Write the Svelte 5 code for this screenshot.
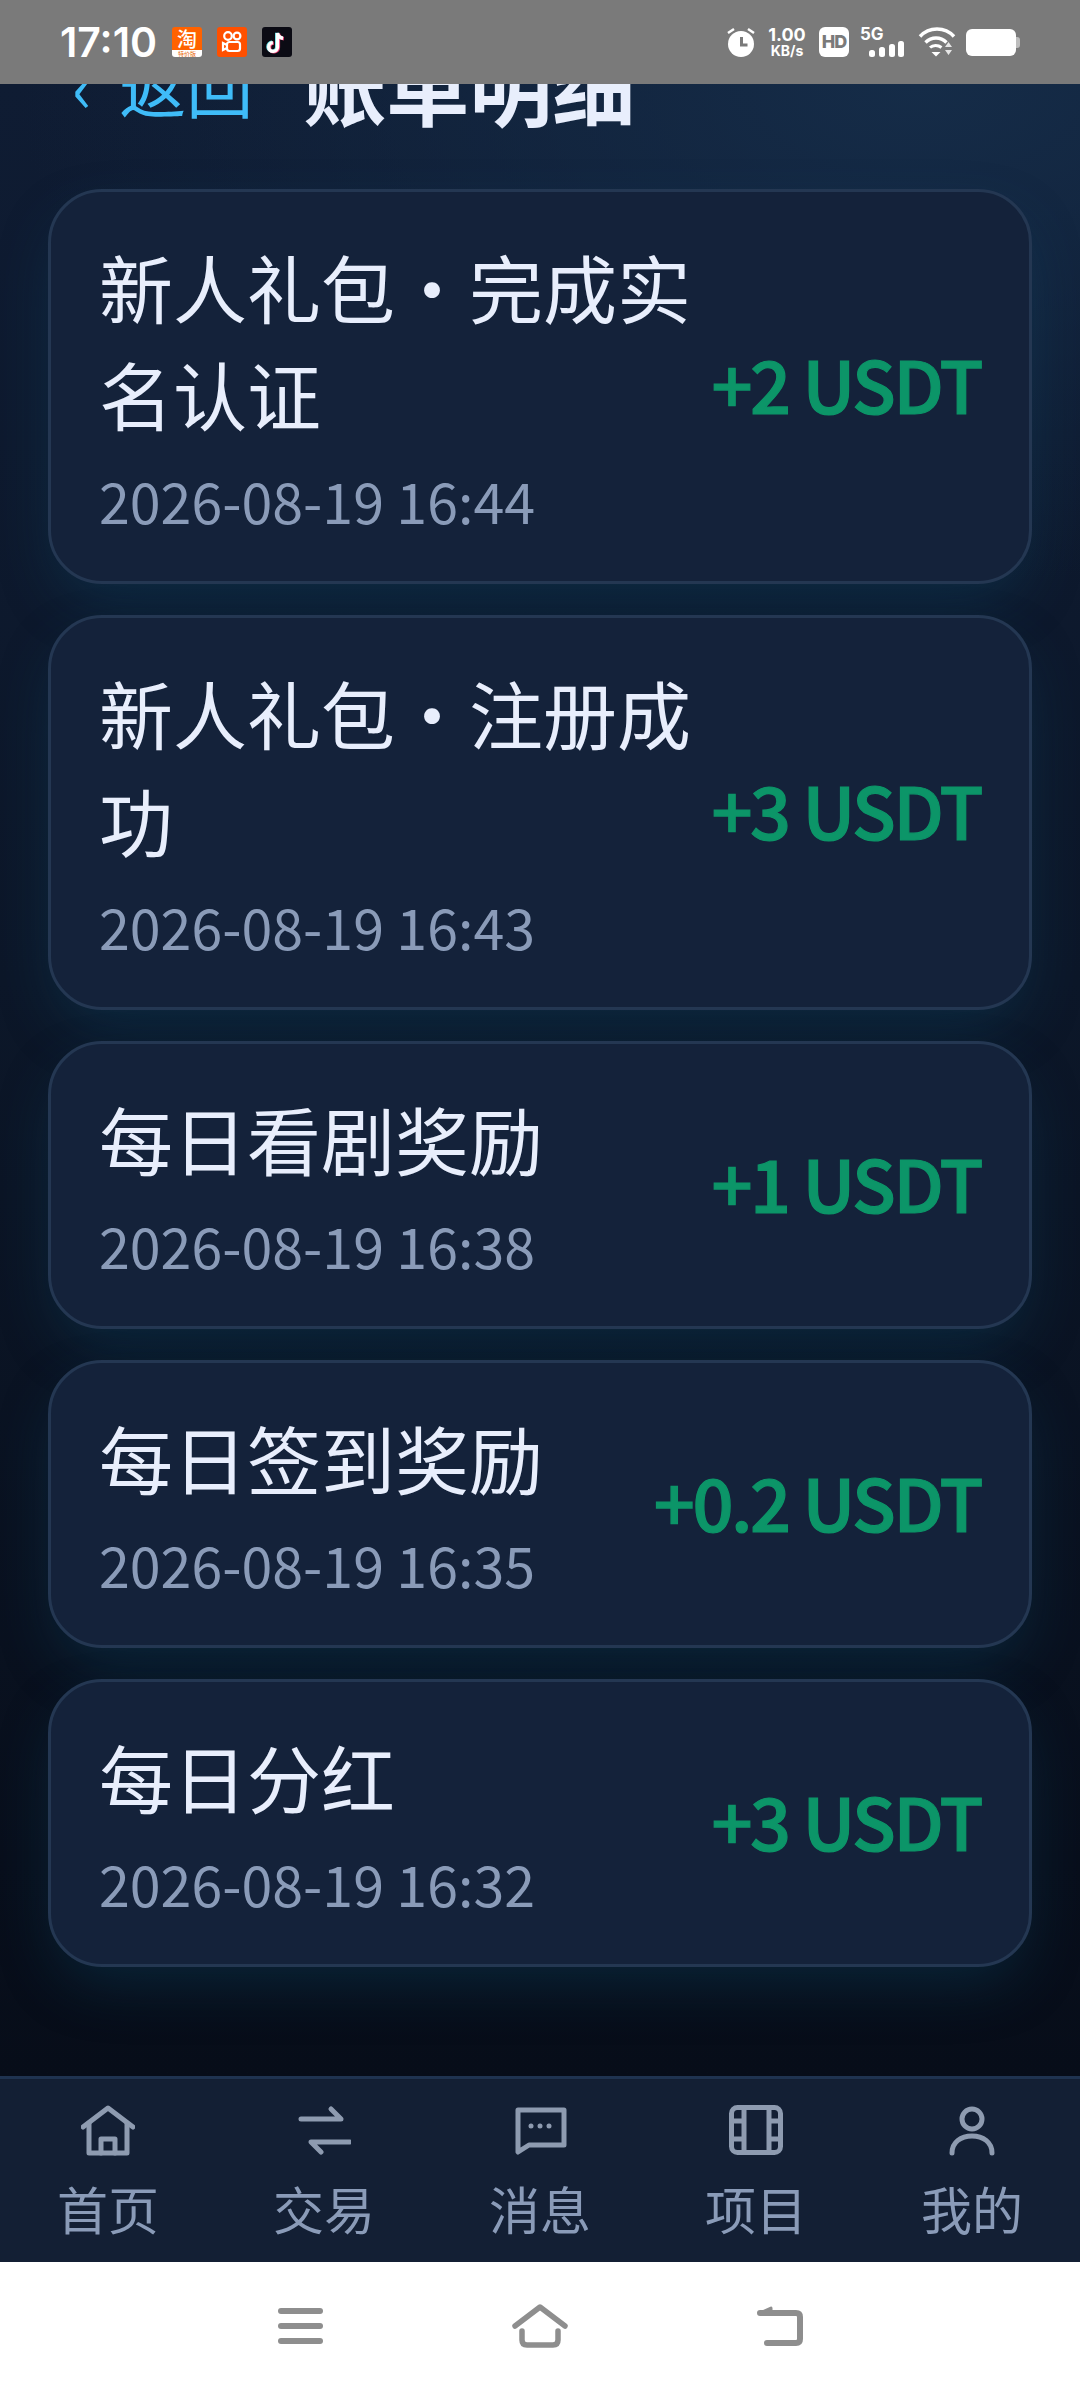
<script>
  const records = [
    { title: "新人礼包・完成实名认证", time: "2026-08-19 16:44", amount: "+2 USDT" },
    { title: "新人礼包・注册成功", time: "2026-08-19 16:43", amount: "+3 USDT" },
    { title: "每日看剧奖励", time: "2026-08-19 16:38", amount: "+1 USDT" },
    { title: "每日签到奖励", time: "2026-08-19 16:35", amount: "+0.2 USDT" },
    { title: "每日分红", time: "2026-08-19 16:32", amount: "+3 USDT" }
  ];
  const tabs = ["首页", "交易", "消息", "项目", "我的"];
</script>

<div class="page">
  <div class="status">
    <span class="clock">17:10</span>
    <span class="app taobao"><b>淘</b><i>特价版</i></span>
    <span class="app kuaishou">
      <svg viewBox="0 0 30 30" width="30" height="30" fill="none" stroke="#fff" stroke-width="2.2">
        <circle cx="11" cy="9" r="3.8" /><circle cx="20" cy="9" r="3.4" />
        <rect x="10" y="15" width="13" height="9" rx="2.5" />
        <path d="M10 18l-4-2v7l4-2" />
      </svg>
    </span>
    <span class="app tiktok">
      <svg viewBox="0 0 30 30" width="30" height="30" fill="none" stroke-width="3.4">
        <path d="M15.5 6v14a4.4 4.4 0 1 1-4.6-4.4M15.5 6c.4 3 2.4 4.8 5.5 5.2" stroke="#5fe0e6" transform="translate(-.8 -.3)" />
        <path d="M15.5 6v14a4.4 4.4 0 1 1-4.6-4.4M15.5 6c.4 3 2.4 4.8 5.5 5.2" stroke="#f0447a" transform="translate(.9 .5)" />
        <path d="M15.5 6v14a4.4 4.4 0 1 1-4.6-4.4M15.5 6c.4 3 2.4 4.8 5.5 5.2" stroke="#fff" />
      </svg>
    </span>
    <span class="spacer"></span>
    <svg class="alarm" viewBox="0 0 28 30" width="28" height="30">
      <circle cx="14" cy="17" r="13" fill="#fff" />
      <path d="M14.5 10v8h6" fill="none" stroke="#7a7a7a" stroke-width="3" />
      <path d="M1 6l6-4M27 6l-6-4" stroke="#fff" stroke-width="2.5" />
    </svg>
    <span class="speed"><b>1.00</b><b class="unit">KB/s</b></span>
    <span class="hd">HD</span>
    <span class="net">
      <span class="five">5G</span>
      <svg viewBox="0 0 36 16" width="36" height="16" fill="#fff">
        <rect x="0" y="9" width="6" height="7" rx="2.5" /><rect x="10" y="6" width="6" height="10" rx="2.5" />
        <rect x="20" y="3" width="6" height="13" rx="2.5" /><rect x="29" y="0" width="6" height="16" rx="2.5" />
      </svg>
    </span>
    <svg class="wifi" viewBox="0 0 38 30" width="38" height="30">
      <path d="M2 9.5C11-.5 27-.5 36 9.5" fill="none" stroke="#fff" stroke-width="3.4" />
      <path d="M7.5 15.5c6-6 15-6 21 0" fill="none" stroke="#fff" stroke-width="3.4" />
      <path d="M12 20.5c3-2.8 8-2.8 11.5 0" fill="none" stroke="#fff" stroke-width="3" />
      <path d="M13.5 25h9l-4.5 4.5z" fill="#fff" />
      <path d="M30.5 15l3.5 5h-7zM27 23h7l-3.5 5z" fill="#e6e6e6" />
    </svg>
    <span class="battery"></span>
  </div>

  <main>
    <header>
      <span class="back">‹ 返回</span>
      <h1>账单明细</h1>
    </header>
    <div class="list">
      {#each records as r}
        <div class="card">
          <div class="info">
            <div class="title">{r.title}</div>
            <div class="time">{r.time}</div>
          </div>
          <div class="amount">{r.amount}</div>
        </div>
      {/each}
    </div>
  </main>

  <nav>
    {#each tabs as tab, i}
      <div class="tab">
        <svg viewBox="0 0 54 54" width="54" height="54" fill="none" stroke="#8e9bb0" stroke-width="5" stroke-linecap="round" stroke-linejoin="round">
          {#if i === 0}
            <path d="M2 22L27 3l25 19" />
            <path d="M8 18v30h38V18" />
            <path d="M20 48V34h14v14" />
          {:else if i === 1}
            <path d="M4 14h40L34 4" />
            <path d="M53 37H14l10 10" />
          {:else if i === 2}
            <path d="M5 5h46v35H16L5 47z" />
            <circle cx="18" cy="21" r="2.5" fill="#8e9bb0" stroke="none" />
            <circle cx="27" cy="21" r="2.5" fill="#8e9bb0" stroke="none" />
            <circle cx="36" cy="21" r="2.5" fill="#8e9bb0" stroke="none" />
          {:else if i === 3}
            <rect x="2.5" y="2.5" width="49" height="45" rx="6" />
            <path d="M15 2.5v45M40 2.5v45M2.5 16h12M2.5 34h12M40 16h11M40 34h11" />
          {:else}
            <circle cx="27" cy="14" r="10" />
            <path d="M7 48C7 37 16 31 27 31s20 6 20 17" />
          {/if}
        </svg>
        <span>{tab}</span>
      </div>
    {/each}
  </nav>

  <div class="sysbar">
    <svg viewBox="0 0 45 36" width="45" height="36" fill="#8e8e8e">
      <rect x="0" y="0" width="45" height="6" rx="3" /><rect x="0" y="15" width="45" height="6" rx="3" /><rect x="0" y="30" width="45" height="6" rx="3" />
    </svg>
    <svg viewBox="0 0 56 44" width="56" height="44" fill="none" stroke="#8e8e8e" stroke-width="5.5" stroke-linecap="round" stroke-linejoin="round">
      <path d="M3 22L28 3l25 19" />
      <path d="M10 27v9q0 5 5 5h26q5 0 5-5v-9" />
    </svg>
    <svg viewBox="0 0 48 42" width="48" height="42" fill="none" stroke="#8e8e8e" stroke-width="6" stroke-linecap="round" stroke-linejoin="round">
      <path d="M11 38H40q4 0 4-4V12q0-4-4-4H4" />
      <path d="M4 8l11-5v5z" fill="#8e8e8e" stroke-width="3" />
    </svg>
  </div>
</div>

<style>
  :global(body) {
    margin: 0;
    background: #fff;
  }
  .page {
    width: 1080px;
    height: 2388px;
    display: flex;
    flex-direction: column;
    overflow: hidden;
    font-family: "Noto Sans CJK SC", sans-serif;
  }
  .status {
    height: 84px;
    flex-shrink: 0;
    background: #7a7a7a;
    display: flex;
    align-items: center;
    padding: 0 64px 0 60px;
    box-sizing: border-box;
    color: #fff;
    font-family: Inter, sans-serif;
  }
  .clock {
    font-size: 41px;
    font-weight: 600;
    width: 112px;
  }
  .app {
    width: 30px;
    height: 30px;
    margin-right: 15px;
    border-radius: 3px;
    display: block;
    overflow: hidden;
  }
  .app svg {
    display: block;
  }
  .taobao {
    background: linear-gradient(#ff6200 76%, #fff 76%);
    text-align: center;
    line-height: 1;
  }
  .taobao b {
    display: block;
    font: 500 20px/23px "Noto Sans CJK SC", sans-serif;
    color: #fff;
  }
  .taobao i {
    display: block;
    font: normal 6px/7px "Noto Sans CJK SC", sans-serif;
    color: #e8680c;
  }
  .kuaishou {
    background: #ff5000;
  }
  .tiktok {
    background: #0b0b14;
  }
  .spacer {
    flex: 1;
  }
  .alarm {
    margin-right: 12px;
  }
  .speed {
    display: flex;
    flex-direction: column;
    align-items: center;
    width: 40px;
    margin-right: 12px;
    font-size: 18px;
    line-height: 16px;
  }
  .speed b {
    font-weight: 700;
  }
  .speed .unit {
    font-size: 14px;
    line-height: 15px;
  }
  .hd {
    width: 30px;
    height: 30px;
    border-radius: 6px;
    background: #fff;
    color: #7a7a7a;
    font-size: 18px;
    font-weight: 800;
    line-height: 30px;
    text-align: center;
    margin-right: 11px;
    letter-spacing: -1px;
  }
  .net {
    width: 45px;
    height: 30px;
    position: relative;
    margin-right: 13px;
  }
  .five {
    position: absolute;
    left: 0;
    top: -2px;
    font-size: 17px;
    font-weight: 700;
    line-height: 18px;
  }
  .net svg {
    position: absolute;
    left: 9px;
    bottom: 0;
  }
  .wifi {
    margin-right: 10px;
  }
  .battery {
    width: 50px;
    height: 27px;
    background: #fff;
    border-radius: 6px;
    position: relative;
  }
  .battery::after {
    content: "";
    position: absolute;
    right: -4px;
    top: 8px;
    width: 4px;
    height: 11px;
    background: #bdbdbd;
    border-radius: 0 3px 3px 0;
  }
  main {
    flex: 1;
    min-height: 0;
    overflow: hidden;
    background:
      radial-gradient(ellipse 900px 500px at 85% 0%, #152c48 0%, rgba(21, 44, 72, 0) 100%),
      linear-gradient(#0f1c33 0%, #0c1729 45%, #070d19 100%);
  }
  header {
    display: flex;
    align-items: center;
    gap: 50px;
    margin-top: -40px;
    padding-left: 72px;
    height: 80px;
  }
  .back {
    font-size: 67px;
    line-height: 80px;
    word-spacing: 12px;
    color: #3fbcf8;
  }
  h1 {
    margin: 0;
    font-size: 83px;
    font-weight: 700;
    line-height: 80px;
    color: #e8eefc;
  }
  .list {
    display: flex;
    flex-direction: column;
    gap: 31px;
    margin-top: 65px;
    padding: 0 48px;
  }
  .card {
    display: flex;
    align-items: center;
    gap: 8px;
    padding: 40px 48px 48px;
    border: 3px solid #243752;
    border-radius: 54px;
    background: #14223a;
    box-shadow: 0 24px 60px -12px rgba(14, 84, 116, 0.36);
  }
  .info {
    flex: 1;
    min-width: 0;
  }
  .title {
    font-size: 74px;
    line-height: 107px;
    color: #e8eefc;
  }
  .time {
    margin-top: 21px;
    font-size: 55.5px;
    line-height: 66px;
    color: #8a9bb8;
  }
  .amount {
    flex-shrink: 0;
    font-size: 72px;
    font-weight: 500;
    letter-spacing: -2.4px;
    -webkit-text-stroke: 1.2px #0c9568;
    color: #0c9568;
  }
  nav {
    height: 186px;
    flex-shrink: 0;
    box-sizing: border-box;
    border-top: 3px solid #1f3350;
    background: #131f34;
    display: grid;
    grid-template-columns: repeat(5, 1fr);
  }
  .tab {
    display: flex;
    flex-direction: column;
    align-items: center;
    padding-top: 26px;
  }
  .tab span {
    font-size: 51px;
    line-height: 64px;
    margin-top: 17px;
    color: #8a9bb8;
  }
  .sysbar {
    height: 126px;
    flex-shrink: 0;
    background: #fff;
    display: grid;
    grid-template-columns: repeat(3, 240px);
    justify-content: center;
    justify-items: center;
    align-items: center;
    padding-top: 2px;
    box-sizing: border-box;
  }
</style>
